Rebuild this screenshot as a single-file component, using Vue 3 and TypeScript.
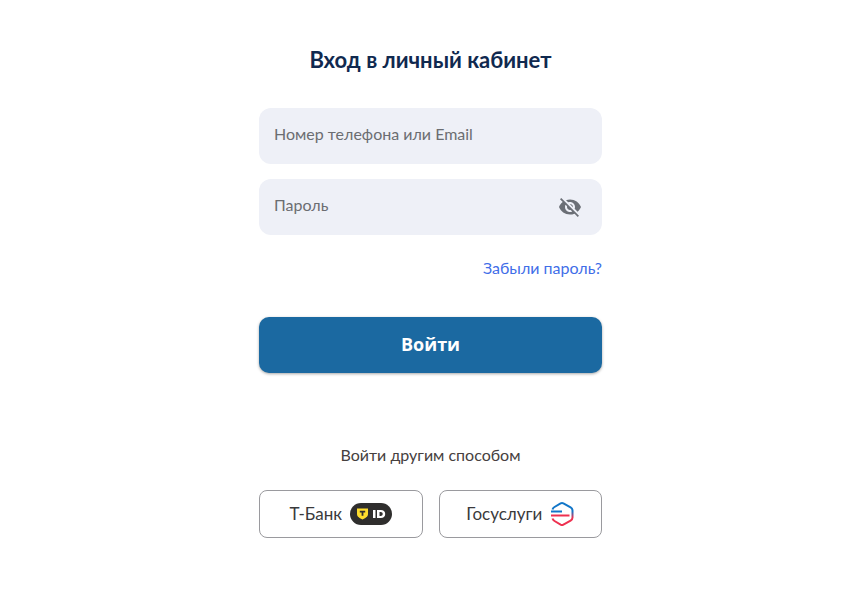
<template>
  <main class="login-page">
    <form class="login-form" @submit.prevent>
      <h1 class="title">Вход в личный кабинет</h1>

      <div class="field">
        <input v-model="login" type="text" placeholder="Номер телефона или Email" />
      </div>

      <div class="field password">
        <input v-model="password" type="password" placeholder="Пароль" />
        <button type="button" class="eye" aria-label="Показать пароль">
          <svg width="24" height="24" viewBox="0 0 24 24" fill="#6b6f76">
            <path d="M12 7c2.76 0 5 2.24 5 5 0 .65-.13 1.26-.36 1.83l2.92 2.92c1.51-1.26 2.7-2.89 3.43-4.75C21.27 7.61 17 4.5 12 4.5c-1.4 0-2.74.25-3.98.7l2.16 2.16C10.74 7.13 11.35 7 12 7z" />
            <path d="M2 4.27l2.28 2.28.46.46C3.08 8.3 1.78 10.02 1 12c1.73 4.39 6 7.5 11 7.5 1.55 0 3.03-.3 4.38-.84l.42.42L19.73 22 21 20.73 3.27 3 2 4.27zM7.53 9.8l1.55 1.55c-.05.21-.08.43-.08.65 0 1.66 1.34 3 3 3 .22 0 .44-.03.65-.08l1.55 1.55c-.67.33-1.41.53-2.2.53-2.76 0-5-2.24-5-5 0-.79.2-1.53.53-2.2z" />
            <path d="M11.84 9.02l3.15 3.15.02-.16c0-1.66-1.34-3-3-3l-.17.01z" />
          </svg>
        </button>
      </div>

      <a class="forgot" href="#">Забыли пароль?</a>

      <button type="submit" class="submit">Войти</button>

      <p class="other">Войти другим способом</p>

      <div class="providers">
        <button type="button" class="provider tbank">
          <span>Т-Банк</span>
          <svg width="42" height="22" viewBox="0 0 42 22">
            <rect width="42" height="22" rx="11" fill="#2f2e2d" />
            <path d="M7 5.500h11v5.500c0 2.900-2.900 4.200-5.500 5.500C9.900 15.200 7 13.900 7 11z" fill="#ffdd2d" />
            <path d="M9.800 7.800h5.400v1.700h-1.800v3.300h-1.800V9.500H9.800z" fill="#2f2e2d" />
            <path d="M23 7h2.500v8H23z" fill="#fff" />
            <path fill-rule="evenodd" d="M27 7h3.800c2.700 0 4.400 1.600 4.400 4s-1.700 4-4.400 4H27zm2.500 2.100v3.800h1.200c1.200 0 2-.7 2-1.900s-.8-1.900-2-1.900z" fill="#fff" />
          </svg>
        </button>
        <button type="button" class="provider gos">
          <span>Госуслуги</span>
          <svg width="24" height="26" viewBox="0 0 24 26" fill="none">
            <defs>
              <linearGradient id="gos-grad" x1="0" y1="0" x2="0" y2="1">
                <stop offset="0.38" stop-color="#1276c8" />
                <stop offset="0.68" stop-color="#ee3150" />
              </linearGradient>
            </defs>
            <path
              d="M2.500 8.500Q3 6.900 4.500 6L10.600 2.300Q12 1.500 13.400 2.300L20.600 6.400Q22.500 7.500 22.500 9.500V16.500Q22.500 18.500 20.600 19.600L13.400 23.700Q12 24.500 10.600 23.700L4.500 20Q3 19.100 2.500 17.500"
              stroke="url(#gos-grad)"
              stroke-width="2"
            />
            <path d="M1 10.500h11" stroke="#1276c8" stroke-width="2" />
            <path d="M1 14.500h18.500" stroke="#ee3150" stroke-width="2" />
          </svg>
        </button>
      </div>
    </form>
  </main>
</template>

<script setup lang="ts">
import { ref } from 'vue'

const login = ref<string>('')
const password = ref<string>('')
</script>

<style>
html,
body {
  margin: 0;
  background: #fff;
}
</style>

<style scoped>
.login-page {
  display: flex;
  justify-content: center;
  min-height: 600px;
  font-family: Lato, 'Liberation Sans', sans-serif;
  padding-left: 1px;
  box-sizing: border-box;
}

.login-form {
  display: flex;
  flex-direction: column;
  width: 343px;
  padding-top: 46px;
}

.title {
  margin: 0 0 35px;
  font-size: 22px;
  line-height: 27px;
  font-weight: 700;
  text-align: center;
  color: #10294f;
}

.field {
  position: relative;
  height: 56px;
  margin-bottom: 15px;
  border-radius: 12px;
  background: #eef0f7;
}

.field input {
  width: 100%;
  height: 50px;
  box-sizing: border-box;
  padding: 0 56px 0 15px;
  border: 0;
  outline: 0;
  background: transparent;
  font-family: inherit;
  font-size: 16px;
  color: #333;
}

.field input::placeholder {
  color: #6b6d71;
  opacity: 1;
}

.eye {
  position: absolute;
  top: 16px;
  right: 20px;
  display: flex;
  padding: 0;
  border: 0;
  background: none;
  cursor: pointer;
}

.forgot {
  align-self: flex-end;
  margin-top: 8px;
  font-size: 16px;
  line-height: 20px;
  color: #3f6ee8;
  text-decoration: none;
}

.submit {
  height: 56px;
  margin-top: 39px;
  padding: 0 0 3px;
  border: 0;
  border-radius: 10px;
  background: #1b69a1;
  box-shadow: 0 1px 3px rgba(0, 0, 0, 0.35);
  color: #fff;
  font-family: 'Open Sans', sans-serif;
  font-size: 18px;
  font-weight: 700;
  cursor: pointer;
}

.other {
  margin: 72px 0 0;
  font-size: 16px;
  line-height: 20px;
  text-align: center;
  color: #46403e;
}

.providers {
  display: flex;
  gap: 16px;
  margin-top: 25px;
}

.provider {
  flex: 1;
  display: flex;
  align-items: center;
  justify-content: center;
  gap: 8px;
  height: 48px;
  padding: 0 0 1px;
  border: 1px solid #9a9a9e;
  border-radius: 8px;
  background: #fff;
  color: #3a3a3c;
  font-family: inherit;
  font-size: 17px;
  cursor: pointer;
}
</style>
